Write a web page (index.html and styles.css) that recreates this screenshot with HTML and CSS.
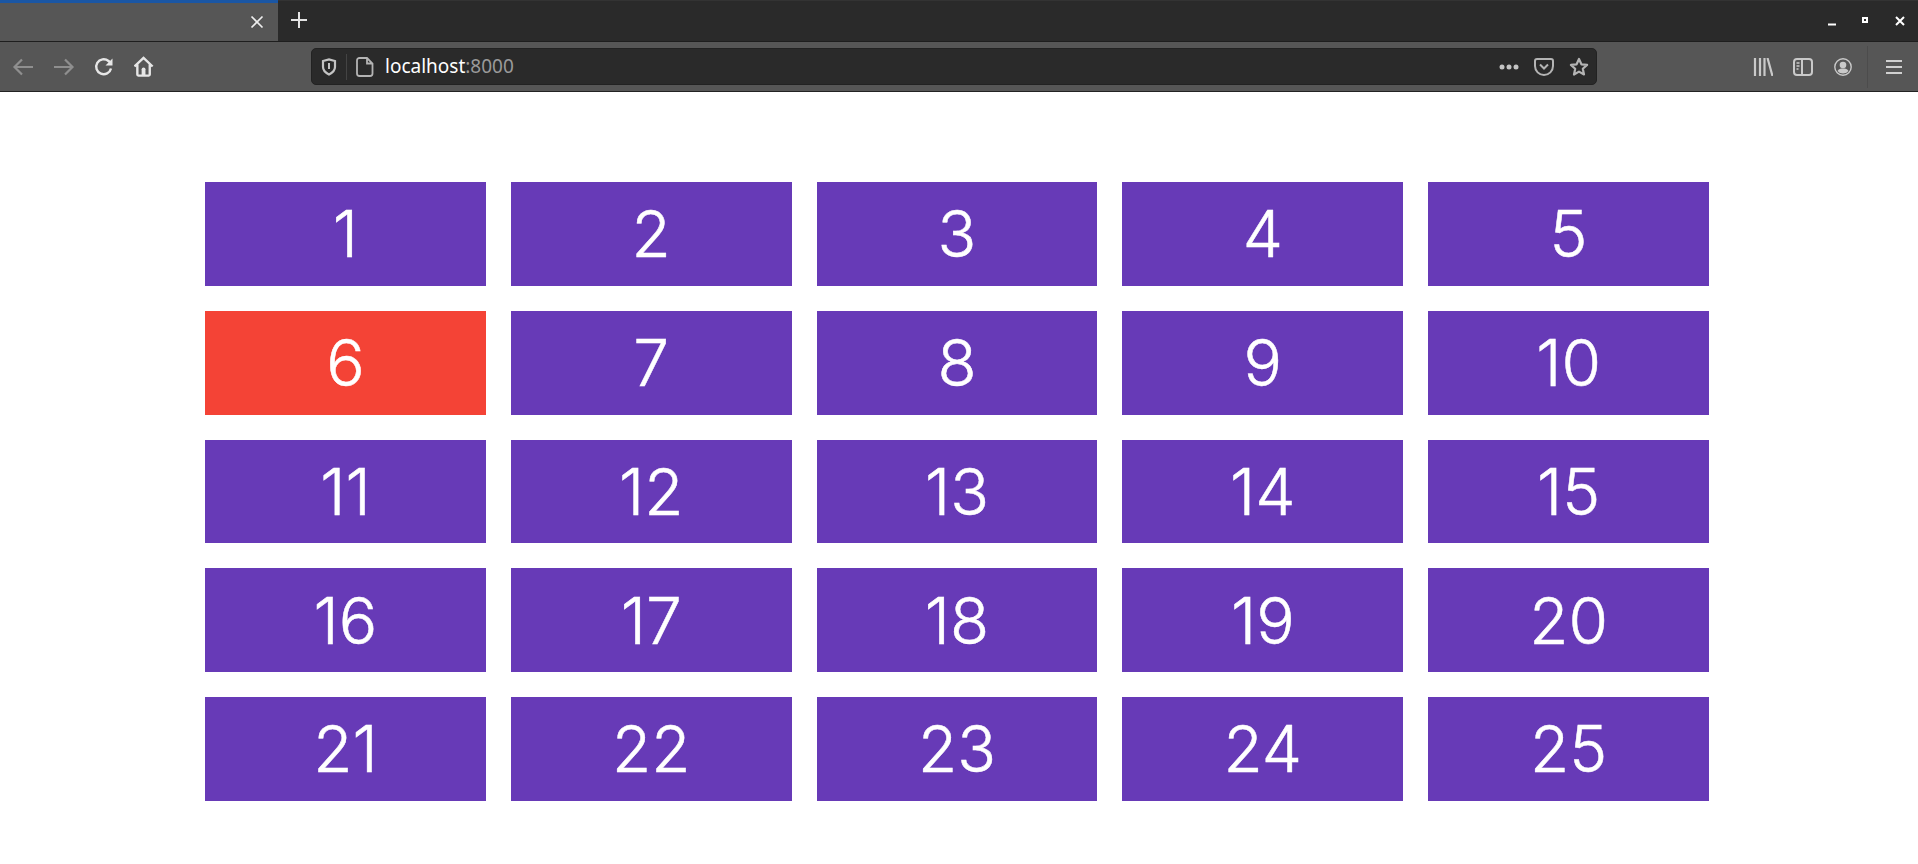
FILE: index.html
```html
<!DOCTYPE html>
<html lang="en">
<head>
    <meta charset="UTF-8">
    <meta name="viewport" content="width=device-width, initial-scale=1.0">
    <title>localhost:8000</title>
    <link rel="stylesheet" href="styles.css">
</head>
<body>
    <!-- Browser chrome -->
    <div class="tabstrip">
        <div class="tab">
            <svg class="tab-close" width="16" height="16" viewBox="0 0 16 16"><path d="M2.500 2.500l11 11M13.500 2.500l-11 11" stroke="#eee" stroke-width="1.700" fill="none"/></svg>
        </div>
        <div class="new-tab">
            <svg width="18" height="18" viewBox="0 0 18 18"><path d="M9 1v16M1 9h16" stroke="#e4e4e4" stroke-width="2" fill="none"/></svg>
        </div>
        <div class="window-buttons">
            <div class="win-btn"><svg width="10" height="10" viewBox="0 0 10 10"><path d="M1 8.500h8" stroke="#fff" stroke-width="2"/></svg></div>
            <div class="win-btn"><svg width="10" height="10" viewBox="0 0 10 10"><rect x="1" y="1" width="6" height="6" fill="#fff"/><rect x="3" y="3" width="2" height="2" fill="#2a2a2a"/></svg></div>
            <div class="win-btn"><svg width="10" height="10" viewBox="0 0 10 10"><path d="M1 1l8 8M9 1l-8 8" stroke="#fff" stroke-width="2"/></svg></div>
        </div>
    </div>

    <div class="toolbar">
        <div class="nav-buttons">
            <div class="tool-btn"><svg width="22" height="20" viewBox="0 0 22 20"><path d="M21 10H2.500M10 2.500L2.500 10l7.500 7.500" stroke="#8f8f8f" stroke-width="2.200" fill="none"/></svg></div>
            <div class="tool-btn"><svg width="22" height="20" viewBox="0 0 22 20"><path d="M1 10h18.500M12 2.500l7.500 7.500-7.500 7.500" stroke="#8f8f8f" stroke-width="2.200" fill="none"/></svg></div>
            <div class="tool-btn"><svg width="20" height="20" viewBox="0 0 20 20"><path d="M17 11.500A7.500 7.500 0 1 1 14.500 4L17 6" stroke="#e6e6e6" stroke-width="2.400" fill="none"/><path d="M18.500 1.500v7h-7z" fill="#e6e6e6"/></svg></div>
            <div class="tool-btn"><svg width="21" height="21" viewBox="1 0 22 22"><path d="M1.500 11L11 2l9.500 9M4.500 9v10.500a1 1 0 0 0 1 1h11a1 1 0 0 0 1-1V9" stroke="#e6e6e6" stroke-width="2.500" fill="none"/><path d="M9 20v-6a2 2 0 0 1 4 0v6z" fill="#e6e6e6"/></svg></div>
        </div>

        <div class="urlbar">
            <div class="url-shield"><svg width="16" height="18" viewBox="0 0 16 18"><path d="M2 3l6-1.500L14 3v6c0 3.500-3 6-6 7.500C5 15 2 12.500 2 9z" stroke="#c4c4c4" stroke-width="2.200" fill="none"/><path d="M7 5h2v6H7z" fill="#c4c4c4"/></svg></div>
            <div class="url-sep"></div>
            <svg class="url-doc" width="18" height="20" viewBox="0 0 18 20"><path d="M3.500 1h7.500l5.500 5.500v10a2.500 2.500 0 0 1-2.500 2.500H3.500A2.500 2.500 0 0 1 1 16.500v-13A2.500 2.500 0 0 1 3.500 1zM11 1v5.500h5.500" stroke="#b4b4b4" stroke-width="1.800" fill="none"/></svg>
            <div class="url-text">localhost<span class="url-port">:8000</span></div>
            <div class="url-actions">
                <div class="url-btn"><svg width="20" height="6" viewBox="0 0 20 6"><circle cx="3" cy="3" r="2.500" fill="#c4c4c4"/><circle cx="10" cy="3" r="2.500" fill="#c4c4c4"/><circle cx="17" cy="3" r="2.500" fill="#c4c4c4"/></svg></div>
                <div class="url-btn"><svg width="20" height="18" viewBox="0 0 20 18"><path d="M3 1h14a2 2 0 0 1 2 2v5a9 9 0 0 1-18 0V3a2 2 0 0 1 2-2z" stroke="#b4b4b4" stroke-width="2" fill="none"/><path d="M6 6.500l4 4 4-4" stroke="#b4b4b4" stroke-width="2" fill="none"/></svg></div>
                <div class="url-btn"><svg width="20" height="20" viewBox="0 0 20 20"><path d="M10 2l2.400 5.300 5.700.6-4.300 3.900 1.200 5.700L10 14.600l-5 2.900 1.200-5.700-4.300-3.900 5.700-.6z" stroke="#b4b4b4" stroke-width="2.200" stroke-linejoin="round" fill="none"/></svg></div>
            </div>
        </div>

        <div class="side-buttons">
            <div class="tool-btn"><svg width="20" height="18" viewBox="0 0 20 18"><path d="M2 0v18M7 0v18M11.500 0v18M14.500 0l5 18" stroke="#c9c9c9" stroke-width="2.200" fill="none"/></svg></div>
            <div class="tool-btn"><svg width="20" height="18" viewBox="0 0 20 18"><rect x="1" y="1" width="18" height="16" rx="3" stroke="#c9c9c9" stroke-width="2" fill="none"/><path d="M9 1v16" stroke="#c9c9c9" stroke-width="2"/><path d="M3.500 5h3M3.500 8h3M3.500 11h2" stroke="#c9c9c9" stroke-width="1.400"/></svg></div>
            <div class="tool-btn"><svg width="18" height="18" viewBox="0 0 18 18"><circle cx="9" cy="9" r="8.200" stroke="#c9c9c9" stroke-width="1.400" fill="none"/><circle cx="9" cy="7" r="3.300" fill="#c9c9c9"/><path d="M3.500 13c1-2 3-2.500 5.500-2.500s4.500.5 5.500 2.500A7 7 0 0 1 9 15.500 7 7 0 0 1 3.500 13z" fill="#c9c9c9"/></svg></div>
            <div class="side-sep"></div>
            <div class="tool-btn"><svg width="16" height="16" viewBox="0 0 16 16"><path d="M0 2h16M0 8h16M0 14h16" stroke="#d0d0d0" stroke-width="2"/></svg></div>
        </div>
    </div>

    <!-- Page -->
    <div class="grid">
        <div class="cell">1</div>
        <div class="cell">2</div>
        <div class="cell">3</div>
        <div class="cell">4</div>
        <div class="cell">5</div>
        <div class="cell active">6</div>
        <div class="cell">7</div>
        <div class="cell">8</div>
        <div class="cell">9</div>
        <div class="cell">10</div>
        <div class="cell">11</div>
        <div class="cell">12</div>
        <div class="cell">13</div>
        <div class="cell">14</div>
        <div class="cell">15</div>
        <div class="cell">16</div>
        <div class="cell">17</div>
        <div class="cell">18</div>
        <div class="cell">19</div>
        <div class="cell">20</div>
        <div class="cell">21</div>
        <div class="cell">22</div>
        <div class="cell">23</div>
        <div class="cell">24</div>
        <div class="cell">25</div>
    </div>
</body>
</html>
```

FILE: styles.css
```css
body {
    font-family: Inter, "Noto Sans", sans-serif;
    background-color: #fff;
    margin: 0;
    padding: 0;
    overflow: hidden;
}

.tabstrip {
    display: flex;
    height: 41px;
    background-color: #2a2a2a;
    border-top: 1px solid #333;
    box-sizing: border-box;
}

.tab {
    width: 278px;
    height: 41px;
    margin-top: -1px;
    background-color: #565656;
    border-top: 3px solid #1a56a4;
    box-sizing: border-box;
    display: flex;
    justify-content: flex-end;
    align-items: center;
    padding-right: 13px;
}

.new-tab {
    width: 42px;
    display: flex;
    justify-content: center;
    align-items: center;
    padding-bottom: 2px;
}

.window-buttons {
    margin-left: auto;
    display: flex;
    padding-right: 1px;
    align-items: center;
}

.win-btn {
    width: 34px;
    display: flex;
    justify-content: center;
}

.toolbar {
    display: flex;
    align-items: center;
    height: 51px;
    background-color: #565656;
    border-top: 1px solid #1e1e1e;
    border-bottom: 1px solid #222;
    box-sizing: border-box;
}

.nav-buttons {
    width: 311px;
    display: flex;
    gap: 0.5px;
    padding-left: 3px;
    box-sizing: border-box;
}

.tool-btn {
    width: 40px;
    height: 32px;
    display: flex;
    justify-content: center;
    align-items: center;
}

.urlbar {
    width: 1286px;
    height: 37px;
    background-color: #2a2a2a;
    border: 1px solid #222;
    border-radius: 5px;
    box-sizing: border-box;
    display: flex;
    align-items: center;
    color: #fff;
}

.url-shield {
    width: 34px;
    display: flex;
    justify-content: center;
}

.url-sep {
    width: 1px;
    height: 26px;
    background-color: #444;
}

.url-doc {
    margin-left: 9px;
}

.url-text {
    margin-left: 11px;
    margin-top: -2px;
    font-family: "Noto Sans", sans-serif;
    font-size: 19px;
}

.url-port {
    color: #9a9a9a;
}

.url-actions {
    margin-left: auto;
    display: flex;
}

.url-btn {
    width: 35px;
    display: flex;
    justify-content: center;
    align-items: center;
}

.side-buttons {
    flex: 1;
    display: flex;
    justify-content: flex-end;
    align-items: center;
    padding-right: 4px;
}

.side-sep {
    width: 1px;
    height: 42px;
    background-color: #4c4c4c;
    margin: 0 6px 0 4px;
}

.grid {
    display: grid;
    grid-template-columns: repeat(5, 280.8px);
    grid-auto-rows: 103.75px;
    gap: 25px;
    padding: 90px 0 0 205px;
}

.cell {
    background-color: #673ab7;
    color: #fff;
    font-size: 64px;
    font-weight: 300;
    -webkit-text-stroke: 0.5px #fff;
    display: flex;
    justify-content: center;
    align-items: center;
}

.cell.active {
    background-color: #f44336;
}
```
